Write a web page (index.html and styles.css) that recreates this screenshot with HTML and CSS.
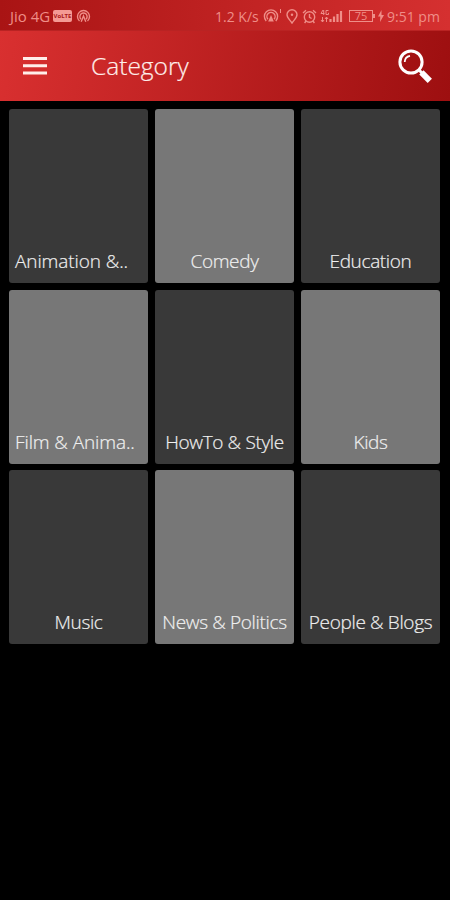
FILE: index.html
```html
<!DOCTYPE html>
<html lang="en">
<head>
    <meta charset="UTF-8">
    <meta name="viewport" content="width=device-width, initial-scale=1.0">
    <title>Category</title>
    <link rel="stylesheet" href="styles.css">
</head>
<body>
    <!-- Status bar -->
    <div class="status-bar">
        <span class="carrier">Jio 4G</span>
        <span class="volte">VoLTE</span>
        <svg class="hotspot" width="15" height="14" viewBox="0 0 15 14">
            <path d="M3.5 12A6 6 0 1 1 11.5 12M5 10.2A3.6 3.6 0 1 1 10 10.2"/>
            <path d="M5.2 12.8L7.5 7L9.8 12.8"/>
        </svg>
        <span class="speed">1.2 K/s</span>
        <svg class="cast" width="19" height="16" viewBox="0 0 19 16">
            <path d="M3.2 13A6.6 6.6 0 1 1 12.8 13M4.9 11.2A4.1 4.1 0 1 1 11.1 11.2"/>
            <path class="solid" d="M8 7L10.8 13.5H5.2Z"/>
            <path class="thin" d="M17.5 1V5"/>
        </svg>
        <svg class="pin" width="12" height="15" viewBox="0 0 12 15">
            <path d="M6 14C4 11 1 8.8 1 5.8A5 5 0 0 1 11 5.8C11 8.8 8 11 6 14Z"/>
            <circle class="solid" cx="6" cy="5.8" r="1.2"/>
        </svg>
        <svg class="alarm" width="15" height="15" viewBox="0 0 15 15">
            <circle cx="7.5" cy="8" r="5.2"/>
            <path d="M7.5 5V8.3L9.6 9.5M1 4L4 1.3M14 4L11 1.3M4 12L2.6 14M11 12L12.4 14"/>
        </svg>
        <svg class="signal" width="24" height="16" viewBox="0 0 24 16">
            <path class="thin" d="M3 2L1 5.5H4.5M3.7 2V7M8.5 2.5H6V6.5H8.5V4.8M2.5 9V14M1 12L2.5 14L4 12M6.5 14V9M5 11L6.5 9L8 11"/>
            <path class="bars" d="M10.5 14V11M14 14V8.5M17.5 14V6M21 14V3"/>
        </svg>
        <span class="battery">75</span>
        <svg class="bolt" width="6" height="12" viewBox="0 0 6 12">
            <path class="solid" d="M3.5 0L0 6.5H2.3L2 12L6 5H3.5Z"/>
        </svg>
        <span class="time">9:51 pm</span>
    </div>

    <!-- Toolbar -->
    <header class="toolbar">
        <button class="menu-button" aria-label="Menu">
            <svg width="24" height="20" viewBox="0 0 24 20">
                <path d="M0 2.5H24M0 9.7H24M0 17H24"/>
            </svg>
        </button>
        <h1>Category</h1>
        <button class="search-button" aria-label="Search">
            <svg width="35" height="35" viewBox="0 0 35 35">
                <circle cx="13" cy="13" r="11.1"/>
                <path class="shine" d="M6.7 13A6.5 6.5 0 0 1 12 6.8"/>
                <path class="neck" d="M20.5 20.5L24 24"/>
                <path class="handle" d="M23.4 23.4L31.8 31.8"/>
            </svg>
        </button>
    </header>

    <!-- Category grid -->
    <main class="category-grid">
        <div class="card clipped"><span>Animation &amp;..</span></div>
        <div class="card"><span>Comedy</span></div>
        <div class="card"><span>Education</span></div>
        <div class="card clipped"><span>Film &amp; Anima..</span></div>
        <div class="card"><span>HowTo &amp; Style</span></div>
        <div class="card"><span>Kids</span></div>
        <div class="card"><span>Music</span></div>
        <div class="card"><span>News &amp; Politics</span></div>
        <div class="card"><span>People &amp; Blogs</span></div>
    </main>
</body>
</html>
```
FILE: styles.css
```css
* {
    box-sizing: border-box;
}
body {
    margin: 0;
    min-height: 900px;
    background: #000;
    font-family: "Open Sans", "Noto Sans", sans-serif;
    font-weight: 300;
}
svg {
    display: block;
    flex: none;
    fill: none;
}
.status-bar {
    display: flex;
    align-items: center;
    height: 30px;
    padding: 2px 9px 0 10px;
    background: linear-gradient(to right, #a91414, #d53030);
    color: #ef8e88;
    font-size: 14px;
    font-weight: 400;
    white-space: nowrap;
}
.status-bar svg {
    stroke: #ef8e88;
    stroke-width: 1.4;
}
.status-bar .solid {
    fill: #ef8e88;
    stroke: none;
}
.status-bar .thin {
    stroke-width: 1;
}
.status-bar .bars {
    stroke-width: 2.2;
}
.carrier {
    width: 43px;
    font-size: 15px;
}
.volte {
    width: 19px;
    height: 12px;
    border-radius: 2px;
    background: #f49a94;
    color: #a91818;
    font-size: 6px;
    font-weight: 700;
    line-height: 12px;
    text-align: center;
}
.hotspot {
    margin-left: 4px;
}
.speed {
    width: 44px;
    margin-left: auto;
}
.cast {
    margin-left: 4px;
}
.pin {
    margin-left: 4px;
}
.alarm {
    margin-left: 4px;
}
.signal {
    margin-left: 3px;
}
.battery {
    position: relative;
    width: 24px;
    height: 12px;
    margin-left: 5px;
    border: 1px solid #ef8e88;
    font-size: 11px;
    line-height: 10px;
    text-align: center;
}
.battery::after {
    content: "";
    position: absolute;
    top: 3px;
    right: -3px;
    width: 2px;
    height: 4px;
    background: #ef8e88;
}
.bolt {
    margin-left: 5px;
}
.time {
    width: 54px;
    margin-left: 3px;
}
.toolbar {
    display: flex;
    align-items: center;
    height: 71px;
    padding: 0 17px 0 23px;
    border-top: 1px solid #b92323;
    background: linear-gradient(100deg, #d93030, #9d0f10);
    color: #ffeeea;
}
.toolbar button {
    padding: 0;
    border: none;
    background: none;
    cursor: pointer;
}
.toolbar h1 {
    margin: 0 auto 0 44px;
    font-size: 24.5px;
    font-weight: 300;
    line-height: 34px;
    -webkit-text-stroke: 0.2px;
}
.menu-button svg {
    stroke: #ffeeea;
    stroke-width: 3;
}
.search-button svg {
    stroke: #fff;
    stroke-width: 3;
}
.search-button .shine {
    stroke-width: 1.8;
}
.search-button .handle {
    stroke-width: 6;
}
.category-grid {
    display: grid;
    grid-template-columns: repeat(3, minmax(0, 1fr));
    grid-auto-rows: 174px;
    gap: 6.5px 7px;
    padding: 8px 10px 0 9px;
}
.card {
    display: flex;
    align-items: flex-end;
    justify-content: center;
    padding: 0 4px 9px;
    border-radius: 3px;
    background: #393939;
    color: #f0f0f0;
    font-size: 19px;
    letter-spacing: -0.35px;
    line-height: 26px;
    white-space: nowrap;
    -webkit-text-stroke: 0.2px;
}
.card:nth-child(even) {
    background: #777;
}
.card.clipped {
    justify-content: flex-start;
    padding-left: 6px;
    letter-spacing: -0.1px;
}
```
